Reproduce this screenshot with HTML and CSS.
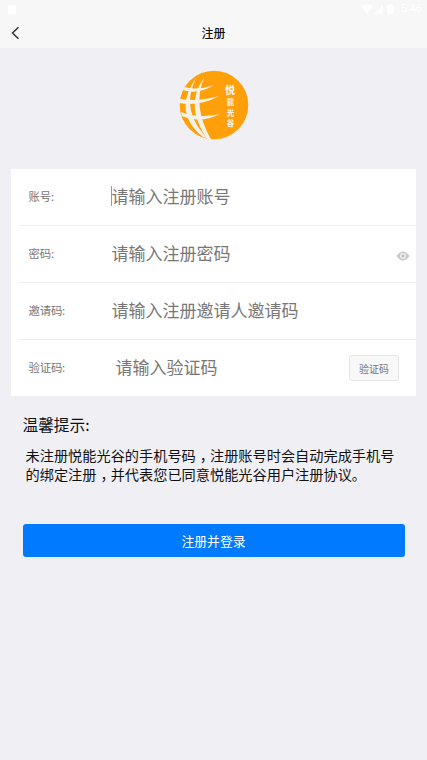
FILE: index.html
```html
<!DOCTYPE html>
<html lang="zh-CN">
<head>
<meta charset="utf-8">
<title>注册</title>
<link rel="stylesheet" href="styles.css">
</head>
<body>
<header>
  <div class="status">
    <svg class="app" width="8" height="9" viewBox="0 0 8 9"><rect width="8" height="9" rx="1"/></svg>
    <svg width="38" height="12" viewBox="0 0 38 12"><path d="M0 3Q6 -1 12 3L6 11ZM22 2V11H13ZM28 1H31V2H33V11H26V2H28Z"/></svg>
    <span>5:46</span>
  </div>
  <nav class="nav">
    <svg class="back" width="9" height="14" viewBox="0 0 9 14"><path d="M7.5 1.2L1.5 7L7.5 12.8"/></svg>
    <h1>注册</h1>
  </nav>
</header>
<main>
  <div class="logo">
    <svg width="70" height="70" viewBox="0 0 70 70">
      <circle cx="35" cy="35" r="34.3"/>
      <g class="grid">
        <path d="M17 8Q-7 42 24 67L28 68Q1 40 17 8Z"/>
        <path d="M25 8Q5 35 28 69L32 69.5Q13 36 25 8Z"/>
        <path d="M6 17Q18 21 35 15Q19 25 4 20Z"/>
        <path d="M1 29Q19 32 40 26Q20 37 0 33Z"/>
        <path d="M2 42Q20 49 41 44Q21 54 3 46Z"/>
      </g>
      <text class="big" x="51" y="24">悦</text>
      <text x="51.5" y="35">能</text>
      <text x="51.5" y="45.5">光</text>
      <text x="51.5" y="56">谷</text>
    </svg>
  </div>
  <section class="form">
    <div class="row"><label>账号:</label><span class="field focus">请输入注册账号</span></div>
    <div class="row"><label>密码:</label><span class="field">请输入注册密码</span>
      <svg class="eye" width="14" height="10" viewBox="0 0 14 10"><path d="M.5 5Q7-4 13.5 5Q7 14 .5 5Z"/><circle cx="7" cy="5" r="3"/><circle class="pupil" cx="7" cy="5" r="1.3"/></svg>
    </div>
    <div class="row"><label>邀请码:</label><span class="field">请输入注册邀请人邀请码</span></div>
    <div class="row"><label>验证码:</label><span class="field code">请输入验证码</span><button class="send">验证码</button></div>
  </section>
  <h2>温馨提示:</h2>
  <p>未注册悦能光谷的手机号码<span class="comma">，</span>注册账号时会自动完成手机号<br>的绑定注册<span class="comma">，</span>并代表您已同意悦能光谷用户注册协议。</p>
  <button class="submit">注册并登录</button>
</main>
</body>
</html>
```
FILE: styles.css
```css
* { box-sizing: border-box; }
body { margin: 0; min-height: 760px; background: #efeff4; font-family: "Noto Sans CJK SC", sans-serif; color: #111; }
header { height: 48px; background: #f7f7f7; }
.status { height: 18px; padding: 0 5px 0 8px; display: flex; align-items: center; fill: #fff; color: #fff; font: 11px/18px Roboto, sans-serif; }
.status .app { margin-right: auto; }
.status span { margin-left: 2px; }
.nav { height: 30px; display: grid; grid-template-columns: 30px 1fr 30px; align-items: center; }
.back { margin-left: 11px; fill: none; stroke: #333; stroke-width: 1.5; }
h1 { margin: 0; text-align: center; font-size: 12px; line-height: 18px; font-weight: 500; }
.logo { height: 121px; padding-top: 22px; padding-left: 179px; }
.logo svg { display: block; fill: #ff9f0a; }
.logo .grid, .logo text { fill: #f5f2e9; }
.logo text { font-size: 7.5px; font-weight: 900; text-anchor: middle; }
.logo .big { font-size: 10px; }
.form { margin: 0 11px; height: 227px; background: #fff; }
.row { height: 57px; margin-left: 8px; padding-left: 9.5px; display: flex; align-items: center; border-bottom: 1px solid #f0f0f2; }
.row:last-child { height: 56px; border: 0; }
label { width: 83px; padding-bottom: 3px; font-size: 11.4px; line-height: 18px; letter-spacing: -.2px; color: #777; }
.field { padding-bottom: 3px; font-size: 17px; line-height: 25px; color: #777; }
.focus { position: relative; }
.focus::before { content: ""; position: absolute; left: -1px; top: 3px; width: 1px; height: 20px; background: #999; }
.code { margin-left: 4px; }
.eye { margin: 4px 6px 0 auto; fill: #c8c8c8; }
.eye circle { fill: #eee; }
.eye .pupil { fill: #b5b5b5; }
button { font-family: inherit; padding: 0; }
.send { width: 50px; height: 26px; margin: 0 17px 0 auto; border: 1px solid #e6e6e6; border-radius: 3px; background: #f8f8f8; color: #777; font-size: 10px; }
h2 { margin: 17px 0 0 22.5px; font-size: 15.7px; line-height: 24px; font-weight: 400; }
p { margin: 9px 0 0 25.5px; font-size: 14.2px; line-height: 19px; white-space: nowrap; }
.comma { padding: 0 3.1px 0 4px; font-feature-settings: "halt"; }
.submit { display: block; width: 382px; height: 33px; margin: 40px 0 0 23px; padding: 0 1px 1px 0; border: 0; border-radius: 3px; background: #007aff; color: #fff; font-size: 12.8px; }
```
